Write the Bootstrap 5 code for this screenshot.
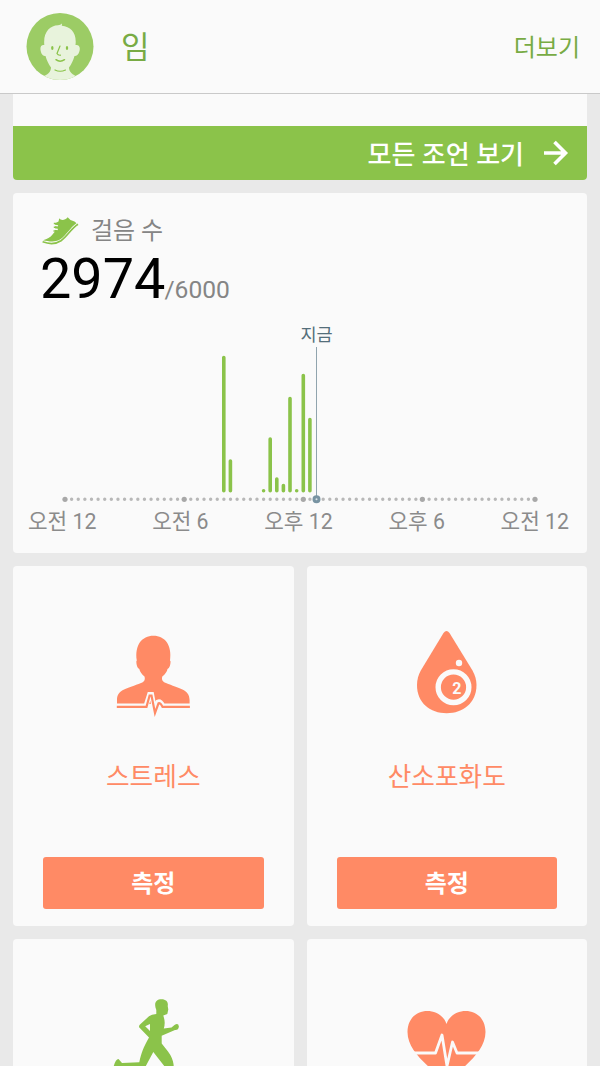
<!DOCTYPE html>
<html lang="ko">
<head>
<meta charset="utf-8">
<meta name="viewport" content="width=device-width, initial-scale=1">
<title>걸음 수</title>
<link href="https://cdn.jsdelivr.net/npm/bootstrap@5.3.0/dist/css/bootstrap.min.css" rel="stylesheet">
<style>
:root { --leaf: #8bc34a; --leaf-text: #78ab44; --coral: #ff8a65; --panel: #fafafa; }
body { background: #e9e9e9; font-family: Roboto, "Noto Sans CJK KR", sans-serif; line-height: 1; }
.screen { height: 1066px; }
.topbar { height: 94px; background: var(--panel); border-bottom: 1px solid #c9c9c9; padding: 0 20px 0 26px; color: var(--leaf-text); }
.avatar { margin-bottom: 2px; }
.user-name { font-size: 31px; margin-left: 27px; padding-top: 2px; }
.more { font-size: 24px; padding-top: 3px; }
.feed { padding: 0 13px; }
.tile { background: var(--panel); border: 0; border-radius: 4px; }
.tips { height: 86px; border-top-left-radius: 0; border-top-right-radius: 0; overflow: hidden; }
.tips-link { height: 54px; background: var(--leaf); color: #fff; font-size: 26px; font-weight: 500; padding-right: 18px; gap: 20px; }
.tips-link span { padding-top: 3px; }
.steps { height: 360px; margin-top: 13px; }
.steps-title { padding: 23px 0 0 29px; height: 52px; gap: 12px; font-size: 24px; color: #858585; }
.steps-title span { padding-top: 1px; }
.steps-count { padding-left: 27px; height: 66px; line-height: 68px; }
.steps-now { font-size: 55.8px; color: #000; }
.steps-goal { font-size: 24.6px; color: #858585; margin-left: -1px; }
.chart-labels { padding: 0 18px 0 15px; font-size: 21.3px; color: #8b8b8b; line-height: 24px; margin-top: 5px; }
.tiles { display: grid; grid-template-columns: 1fr 1fr; gap: 13px; margin-top: 13px; }
.measure { height: 360px; padding: 0 30px 17px; }
.measure-icon { height: 150px; margin-top: 33px; }
.measure-name { font-size: 25.7px; color: var(--coral); margin-top: 14px; line-height: 28px; }
.btn-measure { background: var(--coral); color: #fff; height: 52px; border-radius: 3px; font-size: 24px; font-weight: 700; line-height: 1; padding: 2px 0 0; }
</style>
</head>
<body>
<div class="screen overflow-hidden">
  <header class="topbar d-flex align-items-center">
    <svg class="avatar" width="68" height="68" viewBox="26 12 68 68">
      <defs><clipPath id="face"><circle cx="60" cy="46.500" r="33.500"/></clipPath></defs>
      <circle cx="60" cy="46.500" r="33.500" fill="#9ccc65"/>
      <g clip-path="url(#face)">
        <path d="M44.300 45C43 32 50 25.700 58 25.300Q60.500 25 62 23.500L61.800 25.700C71 26.500 77 33 75.500 45C79 44.500 80.500 47 79.500 51C78.500 55 76.500 56 74.500 56C73 61 71.500 64 69 67.500C69 72 72 74.500 79 77.500L72 82H48L40 77.500C48 75 51 72 51 67.500C48.500 64 47 61 45.500 56C43.500 56 41.500 55 40.700 51C39.800 47 41 44.500 44.300 45Z" fill="#e8f3dc"/>
        <g fill="none" stroke="#8bc34a" stroke-width="1.200" stroke-linecap="round">
          <path d="M60 46L57 53.500Q58 55.500 60.500 55.200"/><path d="M56 59.700Q60 62.800 64.500 59.700" stroke-width="1.500"/><path d="M55 70Q60 72.500 65.500 70"/>
        </g>
        <ellipse cx="52.300" cy="48" rx="1.200" ry="2" fill="#8bc34a"/><ellipse cx="67" cy="48" rx="1.200" ry="2" fill="#8bc34a"/>
      </g>
    </svg>
    <span class="user-name">임</span>
    <span class="more ms-auto">더보기</span>
  </header>
  <main class="feed">
    <section class="card tile tips justify-content-end">
      <div class="tips-link d-flex align-items-center justify-content-end">
        <span>모든 조언 보기</span>
        <svg width="25" height="26" viewBox="0 0 25 26" fill="none" stroke="#fff" stroke-width="3.600"><path d="M0 13H21M10.500 2L21.500 13L10.500 24"/></svg>
      </div>
    </section>
    <section class="card tile steps">
      <div class="steps-title d-flex align-items-center">
        <svg width="37" height="30" viewBox="42 216 37 30">
          <path d="M59.300 218.300C61 220.800 65 220.500 67.700 217.200L70.500 220L74.500 221.500L76.500 223.200C70 227.500 66 236 59.500 239.800C55 242.300 49 241.500 43 240.200C47 239 50.500 237.500 52.500 234.500L55 231.500V223.500L58.500 221.500Z" fill="#8bc34a"/>
          <path d="M54 225.300L58 226M54 229L57.800 229.500" fill="none" stroke="#fafafa" stroke-width="1.600"/>
          <path d="M53.800 223.600H58.500M53.800 227.200H58M53.500 231H57.500" fill="none" stroke="#8bc34a" stroke-width="1.500"/>
          <path d="M42.600 241.800C50 244.500 56 244 61 240.700C67.500 236 71 228.500 78 224.200" fill="none" stroke="#8bc34a" stroke-width="1.700"/>
        </svg>
        <span>걸음 수</span>
      </div>
      <div class="steps-count"><span class="steps-now">2974</span><span class="steps-goal">/6000</span></div>
      <svg class="d-block" width="574" height="194" viewBox="13 311 574 194">
        <text x="316.500" y="341" text-anchor="middle" font-size="17.500" fill="#546e7a">지금</text>
        <g fill="none" stroke="#8bc34a" stroke-width="3.600" stroke-linecap="round">
          <path d="M223.800 357.500V490.700M230.400 461V490.700M263.600 490.700v.1M270.200 439V490.700M276.800 479V490.700M283.400 485.500V490.700M290 398.500V490.700M296.700 490.700v.1M303.300 375.500V490.700M309.900 419.500V490.700"/>
        </g>
        <path d="M65 499.300H535.500" stroke="#b8b8b8" stroke-width="3.400" stroke-linecap="round" stroke-dasharray="0 6.620"/>
        <g fill="#a8a8a8"><circle cx="65" cy="499.300" r="2.600"/><circle cx="184.200" cy="499.300" r="2.600"/><circle cx="303.300" cy="499.300" r="2.600"/><circle cx="422.400" cy="499.300" r="2.600"/><circle cx="535" cy="499.300" r="2.600"/></g>
        <path d="M316.500 347V496" stroke="#90a4ae" stroke-width="1"/>
        <circle cx="316.500" cy="499.300" r="2.500" fill="#dce6ea" stroke="#7893a2" stroke-width="3"/>
      </svg>
      <div class="chart-labels d-flex justify-content-between"><span>오전 12</span><span>오전 6</span><span>오후 12</span><span>오후 6</span><span>오전 12</span></div>
    </section>
    <section class="tiles">
      <article class="card tile measure align-items-center">
        <svg class="measure-icon" width="100" height="150" viewBox="103 599 100 150">
          <path d="M117 704V700C117 689 128 688.500 141 683C145 681.500 145.200 679 144.500 676.500C141.500 674 140 671.500 139.300 669C137.300 668 136.400 665 136.300 661.500L136.800 660.500C134.500 645 142 635.700 153.400 635.700C165 635.700 172.200 645 170 660.500L170.600 661.500C170.500 665 169.500 668 167.500 669C167 671.500 165.300 674 162.300 676.500C161.500 679 162 681.500 166 683C178.500 688.500 189.600 689 189.600 700V704Z" fill="#ff8a65"/>
          <path d="M116 706H146L149.600 694.500H151.600L155 712L158 702Q160.500 701 163 706H191" fill="none" stroke="#fafafa" stroke-width="5"/>
          <path d="M116.800 706.800H146.500L149.600 695.500H151.500L155 713L158.500 703.300Q160.300 702.500 162.500 706.800H189.900" fill="none" stroke="#ff8a65" stroke-width="2.200"/>
        </svg>
        <div class="measure-name">스트레스</div>
        <button class="btn btn-measure w-100 mt-auto" type="button">측정</button>
      </article>
      <article class="card tile measure align-items-center">
        <svg class="measure-icon" width="100" height="150" viewBox="397 599 100 150">
          <path d="M443.500 633Q446.500 629 449.500 633L472.500 670.500C475 675 476.500 680 476.500 685C476.500 703 463 713.200 446.700 713.200C430 713.200 417 703 417 685C417 680 418.300 675 420.800 670.500Z" fill="#ff8a65"/>
          <circle cx="459" cy="663" r="3.200" fill="#fafafa"/><circle cx="453.500" cy="687.200" r="15.300" fill="none" stroke="#fafafa" stroke-width="5.400"/>
          <text x="456.800" y="694" text-anchor="middle" font-size="16" font-weight="700" fill="#fafafa">2</text>
        </svg>
        <div class="measure-name">산소포화도</div>
        <button class="btn btn-measure w-100 mt-auto" type="button">측정</button>
      </article>
      <article class="card tile measure align-items-center">
        <svg class="measure-icon" width="100" height="150" viewBox="103 972 100 150">
          <path d="M156.300 1010C153.500 1003 156 999.300 161.500 999.300C166.500 999.300 168.500 1002.500 167.700 1006L168.300 1009.500L167.300 1014L163.300 1015.500L164 1018Q165.500 1023 163.800 1028.500L171.500 1027.500L174.500 1025Q178.300 1022.500 178.900 1026.500Q178.500 1030.300 175 1030L161.700 1035.700L161.700 1043.500L168 1051.500Q172.500 1057.500 173.500 1064L175 1080H166L165 1067L153.300 1052L144.500 1068.500L119 1069L113.500 1067Q115.500 1059 118.500 1059L122 1063L139.300 1062.300C141 1054 143.500 1047 149 1037.500L139.300 1027.500Q138.500 1026 140 1024.500L149 1016.300Q151.500 1014.300 156.300 1014Z M150 1024L145.200 1026.300L150 1031Z" fill="#8bc34a" fill-rule="evenodd"/>
        </svg>
      </article>
      <article class="card tile measure align-items-center">
        <svg class="measure-icon" width="100" height="150" viewBox="397 972 100 150">
          <path d="M446.500 1024C441 1006 408 1005 407.500 1032C407.500 1052 430 1067 446.500 1083C463 1067 485.500 1052 485.500 1032C485 1005 452 1006 446.500 1024Z" fill="#ff8a65"/>
          <path d="M405 1053H435.500L442 1035L447 1066L452.500 1042L457 1053H488" fill="none" stroke="#fafafa" stroke-width="2.800" stroke-linejoin="round"/>
        </svg>
      </article>
    </section>
  </main>
</div>
<script src="https://cdn.jsdelivr.net/npm/bootstrap@5.3.0/dist/js/bootstrap.bundle.min.js"></script>
</body>
</html>
